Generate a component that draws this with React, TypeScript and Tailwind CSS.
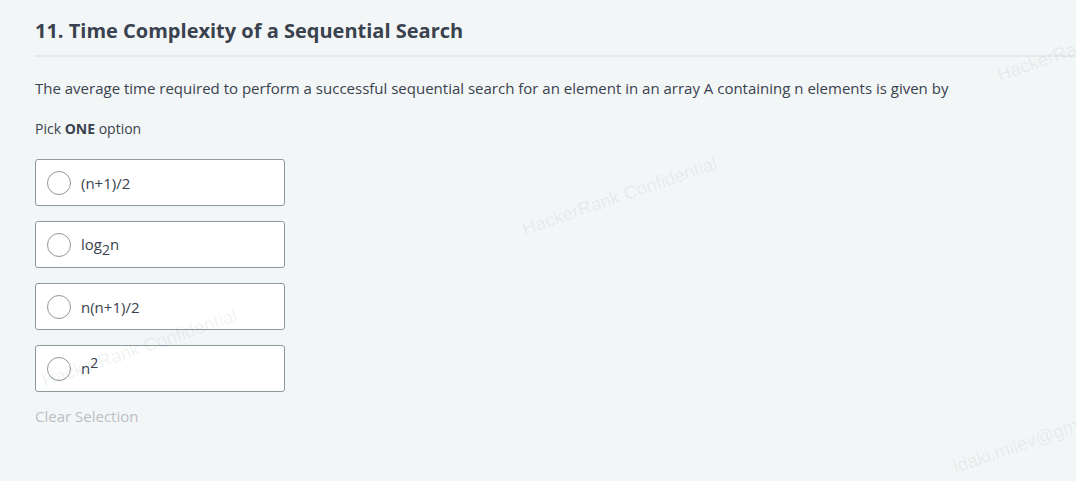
import React from "react";

const options: React.ReactNode[] = [
  "(n+1)/2",
  <>
    log<span className="relative top-[5px] text-[14px]">2</span>n
  </>,
  "n(n+1)/2",
  <>
    n<span className="relative -top-[6px] text-[14px]">2</span>
  </>,
];

function Watermark({ text, className }: { text: string; className: string }) {
  return (
    <div
      className={
        "pointer-events-none absolute whitespace-nowrap text-[18.5px] leading-none text-[#39424e]/[0.08] -rotate-[19deg] origin-bottom-left " +
        className
      }
      style={{ fontFamily: "'Liberation Sans', Arial, sans-serif" }}
    >
      {text}
    </div>
  );
}

export default function App() {
  return (
    <div
      className="relative h-[481px] w-[1076px] overflow-hidden bg-[#f3f6f7] text-[#39424e]"
      style={{ fontFamily: "'Open Sans', sans-serif" }}
    >
      <div className="pl-[35px] pt-[16px]">
        <h2 className="border-b-2 border-[#e7eaec] pb-[9px] text-[20px] font-bold leading-[30px]">
          11. Time Complexity of a Sequential Search
        </h2>
        <p className="mt-[19px] text-[15px] leading-[24px]">
          The average time required to perform a successful sequential search for an element in an array A containing n elements is given by
        </p>
        <p className="mt-[19px] text-[14px] leading-[20px]">
          Pick <span className="font-bold">ONE</span> option
        </p>
        <div className="mt-[20px] flex flex-col gap-[15px]">
          {options.map((o, i) => (
            <label
              key={i}
              className="flex h-[47px] w-[250px] items-center rounded-[3px] border border-[#8d989e] bg-white pl-[11px]"
            >
              <span className="h-[24px] w-[24px] shrink-0 rounded-full border-[1.5px] border-[#8d989e] bg-white" />
              <span className="ml-[10px] text-[15px] leading-[22px]">{o}</span>
            </label>
          ))}
        </div>
        <div className="mt-[13px] text-[15px] leading-[22px] text-[#b9c0c5]">Clear Selection</div>
      </div>
      <Watermark text="HackerRank Confidential" className="left-[526px] top-[220px]" />
      <Watermark text="HackerRank Confidential" className="left-[46px] top-[372px]" />
      <Watermark text="HackerRank Confidential" className="left-[1001px] top-[66px]" />
      <Watermark text="idaki.milev@gmail.com" className="left-[957px] top-[458px]" />
    </div>
  );
}
